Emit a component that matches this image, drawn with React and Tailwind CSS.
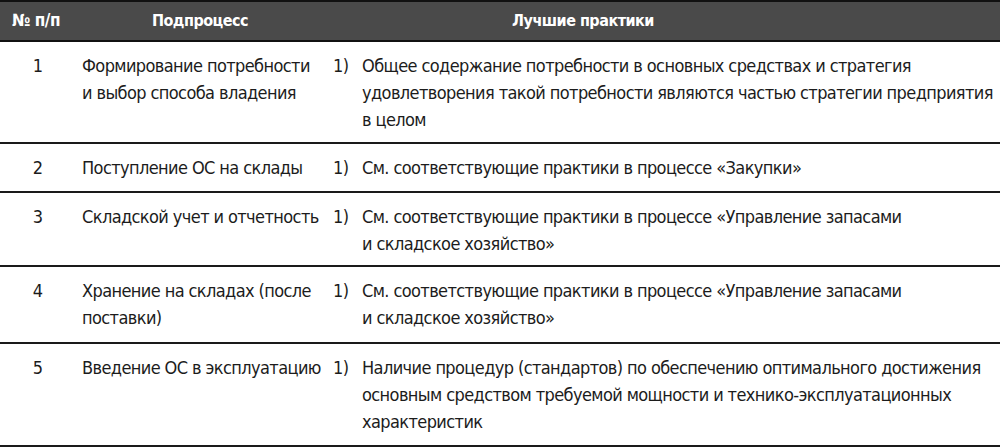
import React from "react";

const rows = [
  {
    n: "1",
    pb: "pb-[9px]",
    sub: ["Формирование потребности", "и выбор способа владения"],
    best: [
      "Общее содержание потребности в основных средствах и стратегия",
      "удовлетворения такой потребности являются частью стратегии предприятия",
      "в целом",
    ],
  },
  { n: "2", pb: "pb-[10px]", sub: ["Поступление ОС на склады"], best: ["См. соответствующие практики в процессе «Закупки»"] },
  {
    n: "3",
    pb: "pb-[8px]",
    sub: ["Складской учет и отчетность"],
    best: ["См. соответствующие практики в процессе «Управление запасами", "и складское хозяйство»"],
  },
  {
    n: "4",
    pb: "pb-[11px]",
    sub: ["Хранение на складах (после", "поставки)"],
    best: ["См. соответствующие практики в процессе «Управление запасами", "и складское хозяйство»"],
  },
  {
    n: "5",
    pb: "pb-[10px]",
    sub: ["Введение ОС в эксплуатацию"],
    best: [
      "Наличие процедур (стандартов) по обеспечению оптимального достижения",
      "основным средством требуемой мощности и технико-эксплуатационных",
      "характеристик",
    ],
  },
];

export default function App() {
  return (
    <div
      className="w-[1000px] h-[448px] bg-white text-[#1c1c1c] overflow-hidden"
      style={{ fontFamily: '"DejaVu Sans Condensed", "DejaVu Sans", sans-serif' }}
    >
      <div className="h-[42px] bg-[#4a4a4a] border-t-[2px] border-b-[2px] border-[#111] text-white font-bold text-[16px] tracking-[-0.5px] flex items-center">
        <div className="w-[75px] shrink-0 pl-[12px] text-[17px]">№ п/п</div>
        <div className="w-[250px] shrink-0 text-center">Подпроцесс</div>
        <div className="w-[516px] shrink-0 text-center">Лучшие практики</div>
      </div>
      {rows.map((r, i) => (
        <div
          key={i}
          className={`flex border-b-[2px] border-[#1a1a1a] pt-[10px] ${r.pb} text-[18px] leading-[27px] tracking-[-0.6px]`}
        >
          <div className="w-[75px] shrink-0 text-center">{r.n}</div>
          <div className="w-[258px] shrink-0 pl-[7px]">
            {r.sub.map((s, j) => (
              <div key={j} className="whitespace-nowrap">{s}</div>
            ))}
          </div>
          <div className="w-[29px] shrink-0">1)</div>
          <div className="flex-1 min-w-0">
            {r.best.map((s, j) => (
              <div key={j} className="whitespace-nowrap">{s}</div>
            ))}
          </div>
        </div>
      ))}
    </div>
  );
}
